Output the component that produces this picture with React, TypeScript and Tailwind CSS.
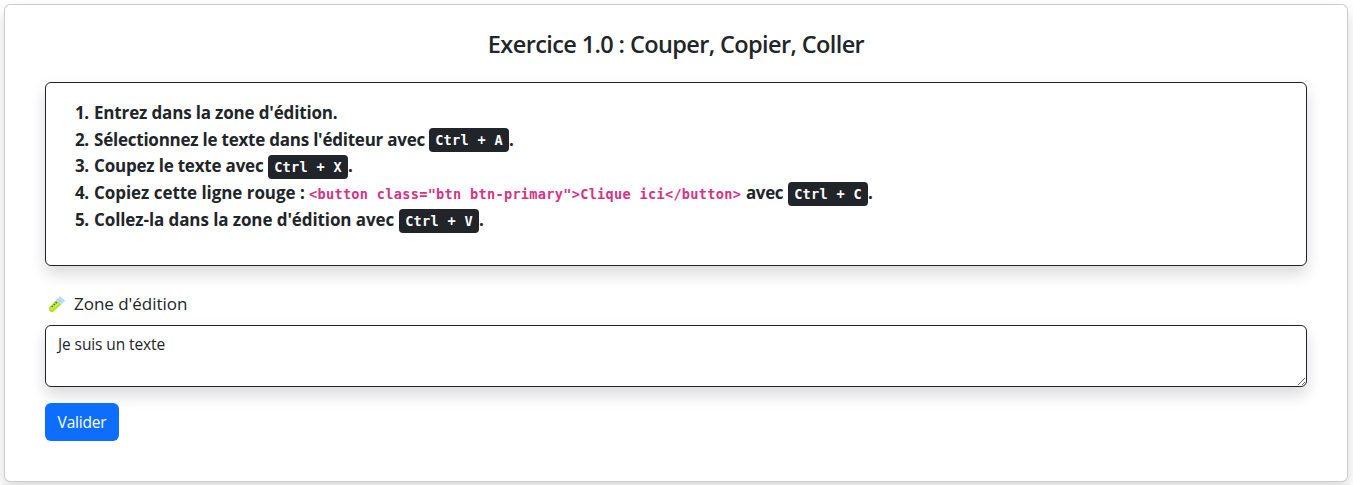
import type { ReactNode } from "react";

function Kbd({ children }: { children: ReactNode }) {
  return (
    <kbd className="relative top-px flex h-[24px] w-[80px] shrink-0 items-center justify-center rounded-[4px] bg-[#212529] pt-[2px] font-['DejaVu_Sans_Mono',monospace] text-[13.6px] leading-none font-bold tracking-[0.28px] whitespace-pre text-white">
      {children}
    </kbd>
  );
}

function Step({ n, children }: { n: number; children: ReactNode }) {
  return (
    <li className="flex h-[26.85px] items-center whitespace-pre">
      <span className="w-[19px] shrink-0">{n}.</span>
      {children}
    </li>
  );
}

function TestTube() {
  return (
    <svg viewBox="0 0 18 18" className="size-[18px]" aria-hidden="true">
      <path d="M8.3 5 13.3 9.3 5.6 16.4Q3.6 17.8 1.7 16.3Q.1 14.4 1.4 12.2Z" fill="#b4e02c" />
      <path d="M8.2 5.1 11.4 1.9 11.7 .8 17.5 6.3 16.2 6.7 13.3 9.3Q11 7 8.2 6.6Z" fill="#b5dcff" />
      <path d="M3.2 13.9 10.3 7.6 11.4 8.5 4 15.3Z" fill="#c8f04e" />
      <path d="m3.6 10.9 1.3 1.1M5.6 9l1.4 1.1M7.6 7l1.4 1.2" stroke="#3d8b3d" strokeWidth="1.3" />
    </svg>
  );
}

export default function App() {
  return (
    <div className="h-[485px] overflow-hidden bg-white pt-1 pr-[5px] pl-1 font-['Open_Sans','Noto_Sans',sans-serif] text-[#212529]">
      <main className="flex h-[478px] flex-col rounded-md border border-black/20 bg-white px-10 shadow-[0_8px_16px_rgba(0,0,0,0.15)]">
        <h1 className="mt-[25px] flex h-[30px] items-center justify-center text-[23.5px] font-semibold tracking-[-0.61px] whitespace-nowrap">
          Exercice 1.0 : Couper, Copier, Coller
        </h1>

        <section className="mt-[22px] h-[184px] rounded-md border border-[#212529] bg-white pt-[16px] pl-[29px] shadow-[0_8px_16px_rgba(0,0,0,0.15)]">
          <ol className="text-[17px] font-bold tracking-[-0.4px]">
            <Step n={1}>
              <span className="tracking-[-0.16px]">Entrez dans la zone d'édition.</span>
            </Step>
            <Step n={2}>
              <span className="w-[335px] shrink-0 tracking-[-0.23px]">Sélectionnez le texte dans l'éditeur avec</span>
              <Kbd>Ctrl + A</Kbd>.
            </Step>
            <Step n={3}>
              <span className="w-[174px] shrink-0 tracking-[-0.2px]">Coupez le texte avec</span>
              <Kbd>Ctrl + X</Kbd>.
            </Step>
            <Step n={4}>
              <span className="w-[215px] shrink-0 tracking-[-0.05px]">Copiez cette ligne rouge :</span>
              <code className="relative top-px w-[437px] shrink-0 font-['DejaVu_Sans_Mono',monospace] text-[13.6px] tracking-[0.29px] text-[#d63384]">
                {'<button class="btn btn-primary">Clique ici</button>'}
              </code>
              <span className="w-[42px] shrink-0">avec</span>
              <Kbd>Ctrl + C</Kbd>.
            </Step>
            <Step n={5}>
              <span className="w-[305px] shrink-0 tracking-[-0.09px]">Collez-la dans la zone d'édition avec</span>
              <Kbd>Ctrl + V</Kbd>.
            </Step>
          </ol>
        </section>

        <label htmlFor="editor" className="mt-[24px] flex h-[28px] items-center pl-[3px] text-[17px] tracking-[-0.02px]">
          <TestTube />
          <span className="ml-[8px]">Zone d'édition</span>
        </label>
        <textarea
          id="editor"
          defaultValue="Je suis un texte"
          className="mt-[7px] block h-[62px] w-full shrink-0 resize rounded-md border border-[#212529] bg-white px-3 py-[6px] text-[15.5px] leading-6 tracking-[-0.1px] shadow-[0_8px_16px_rgba(0,0,0,0.15)] outline-none"
        />
        <button className="mt-4 h-[38px] w-[74px] shrink-0 rounded-md bg-[#0d6efd] pt-[2px] text-[15.5px] tracking-[-0.2px] text-white">
          Valider
        </button>
      </main>
    </div>
  );
}
